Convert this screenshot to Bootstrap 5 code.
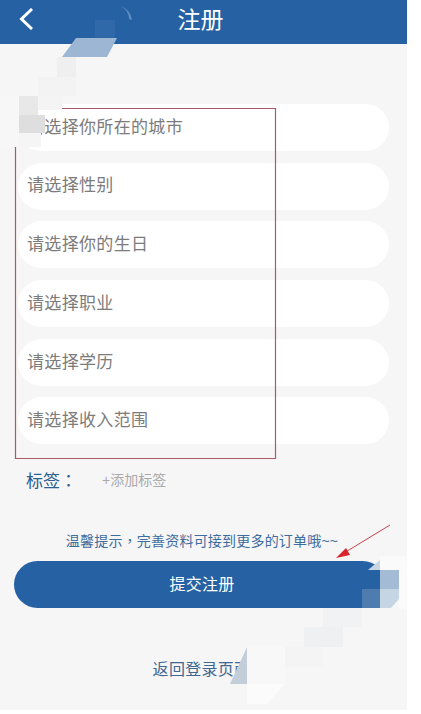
<!DOCTYPE html>
<html lang="zh">
<head>
<meta charset="utf-8">
<title>注册</title>
<link rel="stylesheet" href="https://cdn.jsdelivr.net/npm/bootstrap@5.3.0/dist/css/bootstrap.min.css">
<style>
html,body{background:#fff;margin:0;overflow:hidden}
body{font-family:"Liberation Sans","Noto Sans CJK SC",sans-serif}
.phone{position:relative;width:407px;height:710px;background:#f6f6f6;overflow:hidden}
.topbar{height:44px;background:#2561a3;color:#fff;font-size:23px;padding:0 19px}
.topbar svg{margin-top:-6px}
.topbar .ttl{flex:1;text-align:center;margin-right:20px;margin-top:-4px}
.forms{padding:60px 18px 0;gap:11.7px}
.pill-row{height:47px;background:#fff;border-radius:24px;padding-left:9px;color:#7c7c7c;font-size:17px;letter-spacing:.33px}
.tag-row{padding:20px 26px 0;height:53px}
.tag-lbl{color:#2c5f92;font-size:17px;width:76px}
.tag-add{color:#aaa;font-size:14px}
.cjk-punct{font-family:"Noto Sans CJK TC",sans-serif}
.hint{color:#3d6c9f;font-size:14px;margin-top:33px;line-height:20px;padding-right:3px;letter-spacing:.2px}
.submit{display:block;width:372px;height:47px;margin:10px 0 0 14px;background:#2561a3;color:#fff;border:0;border-radius:24px;font-size:16px;letter-spacing:.3px;padding-left:16px}
.back-lnk{color:#3f6790;font-size:16px;margin-top:50px;letter-spacing:.3px;padding-right:4px}
.overlay{position:absolute;left:0;top:0;pointer-events:none}
</style>
</head>
<body>
<div class="phone">
  <div class="topbar d-flex align-items-center">
    <svg width="14" height="22" viewBox="0 0 14 22"><path d="M13 1 2.500 11 13 21" fill="none" stroke="#fff" stroke-width="3"/></svg>
    <div class="ttl">注册</div>
  </div>
  <div class="forms d-flex flex-column">
    <div class="pill-row d-flex align-items-center">请选择你所在的城市</div>
    <div class="pill-row d-flex align-items-center">请选择性别</div>
    <div class="pill-row d-flex align-items-center">请选择你的生日</div>
    <div class="pill-row d-flex align-items-center">请选择职业</div>
    <div class="pill-row d-flex align-items-center">请选择学历</div>
    <div class="pill-row d-flex align-items-center">请选择收入范围</div>
  </div>
  <div class="tag-row d-flex align-items-center">
    <span class="tag-lbl">标签<span class="cjk-punct" lang="zh-Hant">：</span></span><span class="tag-add">+添加标签</span>
  </div>
  <div class="hint text-center">温馨提示<span class="cjk-punct" lang="zh-Hant">，</span>完善资料可接到更多的订单哦~~</div>
  <button class="submit btn" type="button">提交注册</button>
  <div class="back-lnk text-center">返回登录页面</div>
  <svg class="overlay" width="407" height="710" viewBox="0 0 407 710">
    <!-- mosaic, top -->
    <path d="M120 6a16 16 0 0 1 12 14l-3-1a14 14 0 0 0-9-13z" fill="#5f8bbd"/>
    <rect x="95" y="20" width="20" height="18" fill="#2f69a9"/>
    <path d="M62 57 76 38h41l-10 19z" fill="#9db6d3"/>
    <rect x="57" y="57" width="19" height="20" fill="#efefef"/>
    <rect x="38" y="77" width="38" height="19" fill="#f3f3f3"/>
    <rect x="0" y="96" width="19" height="19" fill="#f7f7f7"/>
    <rect x="19" y="96" width="19" height="19" fill="#e8e8e8"/>
    <rect x="38" y="96" width="24" height="14" fill="#f4f4f4"/>
    <rect x="0" y="115" width="19" height="35" fill="#f7f7f7"/>
    <rect x="19" y="115" width="26" height="18" fill="#dedede"/>
    <rect x="19" y="133" width="22" height="14" fill="#f5f5f5"/>
    <!-- red annotation box -->
    <path d="M15.500 147V458.500H275.500V108.500H62" fill="none" stroke="#a85a68" stroke-width="1.200"/>
    <!-- arrow -->
    <path d="M390 525 344 553" stroke="#c9414c" stroke-width="1"/>
    <path d="M336 558 346 548 350 555z" fill="#d8242c"/>
    <!-- mosaic, lower right -->
    <path d="M368 570 380 560v10z" fill="#c8d6e4"/>
    <path d="M380 556h27v54h-8v-40h-19z" fill="#fafafa"/>
    <rect x="380" y="570" width="19" height="19" fill="#a3bbd4"/>
    <path d="M380 589h19v10l-8 9h-11z" fill="#c5d5e3"/>
    <rect x="362" y="589" width="18" height="19" fill="#4f7cae"/>
    <rect x="323" y="608" width="39" height="19" fill="#f1f2f3"/>
    <rect x="304" y="627" width="39" height="20" fill="#eff0f1"/>
    <rect x="285" y="647" width="38" height="20" fill="#f4f4f5"/>
    <path d="M230 684 247 647v37z" fill="#c4ced9"/>
    <rect x="247" y="647" width="38" height="37" fill="#f8f8f8"/>
    <path d="M247 684h38l-18 20h-20z" fill="#fbfbfb"/>
  </svg>
</div>
<script src="https://cdn.jsdelivr.net/npm/bootstrap@5.3.0/dist/js/bootstrap.bundle.min.js"></script>
</body>
</html>
